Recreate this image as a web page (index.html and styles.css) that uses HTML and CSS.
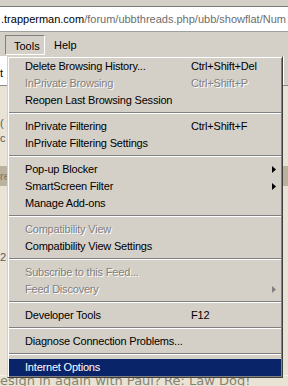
FILE: index.html
```html
<!DOCTYPE html>
<html lang="en">
<head>
  <meta charset="UTF-8" />
  <title>Tools menu</title>
  <link rel="stylesheet" href="styles.css">
</head>
<body>
  <div class="top-strip"></div>
  <div class="address">
    <span class="host">.trapperman.com</span><span class="path">/forum/ubbthreads.php/ubb/showflat/Num</span>
  </div>
  <div class="menubar">
    <span class="menu-title open">Tools</span>
    <span class="menu-title">Help</span>
  </div>

  <!-- page behind the menu -->
  <div class="page">
    <div class="page-head"><span class="frag">t</span><span class="gutter"></span></div>
    <div class="page-block first">
      <span class="frag">(</span>
      <span class="frag">c</span>
    </div>
    <div class="page-band"><span class="frag">re</span></div>
    <div class="page-block second"><span class="frag">2</span></div>
    <div class="page-foot">
      <span class="subject">esign in again with Paul?</span>
      <span class="reply">Re: Law Dog!</span>
    </div>
  </div>

  <!-- dropdown -->
  <div class="dropdown">
    <div class="item"><span>Delete Browsing History...</span><span>Ctrl+Shift+Del</span></div>
    <div class="item disabled"><span>InPrivate Browsing</span><span>Ctrl+Shift+P</span></div>
    <div class="item"><span>Reopen Last Browsing Session</span></div>
    <div class="sep"></div>
    <div class="item"><span>InPrivate Filtering</span><span>Ctrl+Shift+F</span></div>
    <div class="item"><span>InPrivate Filtering Settings</span></div>
    <div class="sep"></div>
    <div class="item"><span>Pop-up Blocker</span><span></span><span class="arrow"></span></div>
    <div class="item"><span>SmartScreen Filter</span><span></span><span class="arrow"></span></div>
    <div class="item"><span>Manage Add-ons</span></div>
    <div class="sep"></div>
    <div class="item disabled"><span>Compatibility View</span></div>
    <div class="item"><span>Compatibility View Settings</span></div>
    <div class="sep"></div>
    <div class="item disabled"><span>Subscribe to this Feed...</span></div>
    <div class="item disabled"><span>Feed Discovery</span><span></span><span class="arrow"></span></div>
    <div class="sep"></div>
    <div class="item"><span>Developer Tools</span><span>F12</span></div>
    <div class="sep"></div>
    <div class="item"><span>Diagnose Connection Problems...</span></div>
    <div class="sep"></div>
    <div class="item selected"><span>Internet Options</span></div>
  </div>
</body>
</html>
```

FILE: styles.css
```css
body {
  margin: 0;
  width: 288px;
  height: 386px;
  overflow: hidden;
  position: relative;
  background: #d4d0c8;
  font-family: "Liberation Sans", Arial, sans-serif;
  font-size: 11px;
  color: #000;
}
.top-strip {
  height: 6px;
}
.address {
  height: 24px;
  background: #fff;
  border-top: 1px solid #7b7b7b;
  border-bottom: 1px solid #a0a0a0;
  display: flex;
  align-items: center;
  padding-left: 1px;
  white-space: nowrap;
  overflow: hidden;
}
.path {
  color: #6d6d6d;
}
.menubar {
  height: 24px;
  box-sizing: border-box;
  padding: 3px 0 0 5px;
  display: flex;
}
.menu-title {
  height: 20px;
  box-sizing: border-box;
  padding: 3px 8px 0 9px;
  line-height: 15px;
}
.menu-title.open {
  width: 40px;
  padding-left: 8px;
  border: 1px solid;
  border-color: #808080 #fff #fff #808080;
}

/* page behind */
.page {
  height: 330px;
  background: #e9e3d6;
  display: flex;
  flex-direction: column;
  overflow: hidden;
}
.page-head {
  height: 29px;
  flex: none;
  background: #fff;
  border-bottom: 1px solid #8a8a8a;
  display: flex;
  justify-content: space-between;
  align-items: flex-end;
}
.page-head .frag {
  color: #000;
  line-height: 17px;
  padding: 0 0 3px 0;
}
.gutter {
  align-self: stretch;
  width: 4px;
  background: #d4d0c8;
}
.frag {
  color: #5a5a5a;
  line-height: 15px;
}
.page-block {
  flex: none;
  display: flex;
  flex-direction: column;
}
.page-block.first {
  height: 80px;
  box-sizing: border-box;
  padding-top: 30px;
}
.page-band {
  height: 20px;
  flex: none;
  background: #bab29c;
  line-height: 20px;
}
.page-band .frag {
  color: #7a7463;
  line-height: 20px;
}
.page-block.second {
  height: 190px;
  box-sizing: border-box;
  padding-top: 64px;
  border-bottom: 1px solid #f6f2ea;
}
.page-foot {
  flex: 1;
  display: flex;
  font-family: "DejaVu Sans", Verdana, sans-serif;
  font-size: 13px;
  line-height: 10px;
  white-space: nowrap;
  color: #86846f;
}
.subject {
  width: 164px;
}

/* dropdown */
.dropdown {
  position: absolute;
  top: 56px;
  left: 7px;
  width: 276px;
  box-sizing: border-box;
  padding: 1px;
  border: 1px solid;
  border-color: #d4d0c8 #404040 #404040 #d4d0c8;
  box-shadow: inset 1px 1px #fff, inset -1px -1px #808080;
  background: #d4d0c8;
}
.item {
  height: 17px;
  line-height: 17px;
  padding-left: 16px;
  display: grid;
  grid-template-columns: 166px 1fr 12px;
  white-space: nowrap;
  letter-spacing: -0.2px;
}
.item.disabled {
  color: #808080;
  text-shadow: 1px 1px 0 #fff;
}
.item.selected {
  background: #0a246a;
  color: #fff;
}
.arrow {
  width: 4px;
  height: 7px;
  margin: 5px 0 0 3px;
  background: #000;
  clip-path: polygon(0 0, 100% 50%, 0 100%);
}
.item.disabled .arrow {
  background: #808080;
}
.sep {
  margin: 3px 0 4px;
  border-top: 1px solid #808080;
  border-bottom: 1px solid #fff;
}
```
